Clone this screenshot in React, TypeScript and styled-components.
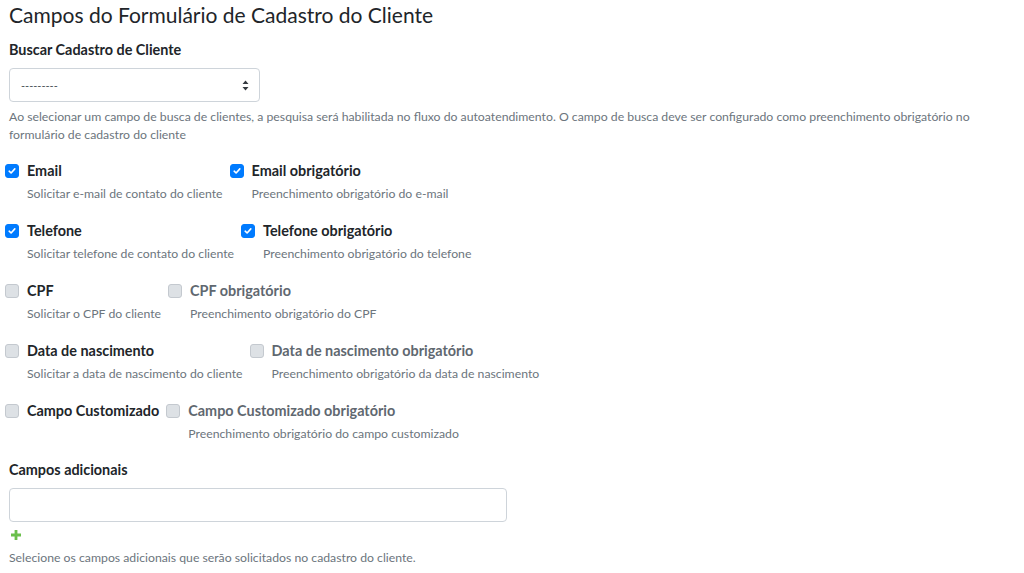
import React from 'react'
import styled, { createGlobalStyle } from 'styled-components'

type Field = {
  label: string
  desc: string
  checked: boolean
  required: string
  requiredDesc: string
  requiredChecked: boolean
}

const fields: Field[] = [
  {
    label: 'Email',
    desc: 'Solicitar e-mail de contato do cliente',
    checked: true,
    required: 'Email obrigatório',
    requiredDesc: 'Preenchimento obrigatório do e-mail',
    requiredChecked: true,
  },
  {
    label: 'Telefone',
    desc: 'Solicitar telefone de contato do cliente',
    checked: true,
    required: 'Telefone obrigatório',
    requiredDesc: 'Preenchimento obrigatório do telefone',
    requiredChecked: true,
  },
  {
    label: 'CPF',
    desc: 'Solicitar o CPF do cliente',
    checked: false,
    required: 'CPF obrigatório',
    requiredDesc: 'Preenchimento obrigatório do CPF',
    requiredChecked: false,
  },
  {
    label: 'Data de nascimento',
    desc: 'Solicitar a data de nascimento do cliente',
    checked: false,
    required: 'Data de nascimento obrigatório',
    requiredDesc: 'Preenchimento obrigatório da data de nascimento',
    requiredChecked: false,
  },
  {
    label: 'Campo Customizado',
    desc: '',
    checked: false,
    required: 'Campo Customizado obrigatório',
    requiredDesc: 'Preenchimento obrigatório do campo customizado',
    requiredChecked: false,
  },
]

const GlobalStyle = createGlobalStyle`
  body {
    margin: 0;
    background: #ffffff;
    font-family: Lato, 'Noto Sans', sans-serif;
    color: #212529;
  }
`

const Page = styled.div`
  padding: 2px 9px 0;
`

const Title = styled.h4`
  margin: 0 0 12px;
  font-size: 21px;
  line-height: 26px;
  font-weight: 400;
  color: #212529;
`

const FieldLabel = styled.label`
  display: block;
  font-size: 14.4px;
  line-height: 20px;
  font-weight: 700;
  margin-bottom: 8px;
`

const SelectBox = styled.div`
  display: flex;
  align-items: center;
  justify-content: space-between;
  width: 251px;
  height: 34px;
  box-sizing: border-box;
  padding: 0 10px 0 11px;
  border: 1px solid #ced4da;
  border-radius: 4px;
  font-size: 11px;
  color: #495057;
`

const TextInput = styled.div`
  margin-top: 1px;
  width: 498px;
  height: 34px;
  box-sizing: border-box;
  border: 1px solid #ced4da;
  border-radius: 4px;
`

const HelpText = styled.p<{ $top?: number }>`
  margin: ${(p) => p.$top ?? 6}px 0 0;
  font-size: 12.25px;
  line-height: 18px;
  color: #6c757d;
`

const Checks = styled.div`
  margin: 17px 0 0 -4px;
  display: flex;
  flex-direction: column;
  gap: 16px;
`

const CheckRow = styled.div`
  display: flex;
  align-items: flex-start;
  gap: 7px;
  min-height: 44px;
`

const CheckItem = styled.div`
  display: flex;
  align-items: flex-start;
`

const Box = styled.span<{ $checked: boolean }>`
  flex: none;
  width: 14px;
  height: 14px;
  margin: 3px 8px 0 0;
  box-sizing: border-box;
  border-radius: 3px;
  border: 1px solid ${(p) => (p.$checked ? '#007bff' : '#c4c9cf')};
  background: ${(p) => (p.$checked ? '#007bff' : '#dde1e5')};
  display: flex;
  align-items: center;
  justify-content: center;
`

const CheckText = styled.div`
  display: flex;
  flex-direction: column;
`

const CheckLabel = styled.span<{ $muted: boolean }>`
  font-size: 14.4px;
  line-height: 20px;
  font-weight: 700;
  color: ${(p) => (p.$muted ? '#5f6870' : '#212529')};
  white-space: nowrap;
`

const CheckDesc = styled.span`
  margin-top: 4px;
  font-size: 12.25px;
  line-height: 18px;
  color: #6c757d;
  white-space: nowrap;
`

const Extra = styled.div`
  margin-top: 15px;
`

const AddButton = styled.div`
  margin: 8px 0 0 2px;
  height: 10px;
  display: flex;
`

function Check({ checked, label, desc, muted }: { checked: boolean; label: string; desc: string; muted: boolean }) {
  return (
    <CheckItem>
      <Box $checked={checked}>
        {checked && (
          <svg width="8" height="8" viewBox="0 0 8 8">
            <path d="M1.2 4.2 L3.1 6 L6.8 1.9" stroke="#fff" strokeWidth="1.6" fill="none" strokeLinecap="round" strokeLinejoin="round" />
          </svg>
        )}
      </Box>
      <CheckText>
        <CheckLabel $muted={muted}>{label}</CheckLabel>
        {desc && <CheckDesc>{desc}</CheckDesc>}
      </CheckText>
    </CheckItem>
  )
}

export default function App() {
  return (
    <Page>
      <GlobalStyle />
      <Title>Campos do Formulário de Cadastro do Cliente</Title>
      <FieldLabel>Buscar Cadastro de Cliente</FieldLabel>
      <SelectBox>
        <span>---------</span>
        <svg width="7" height="11" viewBox="0 0 7 11">
          <path d="M3.5 0.5 L6.5 4 H0.5 Z M3.5 10.5 L6.5 7 H0.5 Z" fill="#343a40" />
        </svg>
      </SelectBox>
      <HelpText>
        Ao selecionar um campo de busca de clientes, a pesquisa será habilitada no fluxo do autoatendimento. O campo de busca deve ser configurado como preenchimento obrigatório no formulário de cadastro do cliente
      </HelpText>
      <Checks>
        {fields.map((f) => (
          <CheckRow key={f.label}>
            <Check checked={f.checked} label={f.label} desc={f.desc} muted={false} />
            <Check checked={f.requiredChecked} label={f.required} desc={f.requiredDesc} muted={!f.checked} />
          </CheckRow>
        ))}
      </Checks>
      <Extra>
        <FieldLabel>Campos adicionais</FieldLabel>
        <TextInput />
        <AddButton>
          <svg width="10" height="10" viewBox="0 0 10 10">
            <path d="M3.6 0 H6.4 V3.6 H10 V6.4 H6.4 V10 H3.6 V6.4 H0 V3.6 H3.6 Z" fill="#6abf4b" />
          </svg>
        </AddButton>
        <HelpText $top={9}>Selecione os campos adicionais que serão solicitados no cadastro do cliente.</HelpText>
      </Extra>
    </Page>
  )
}
